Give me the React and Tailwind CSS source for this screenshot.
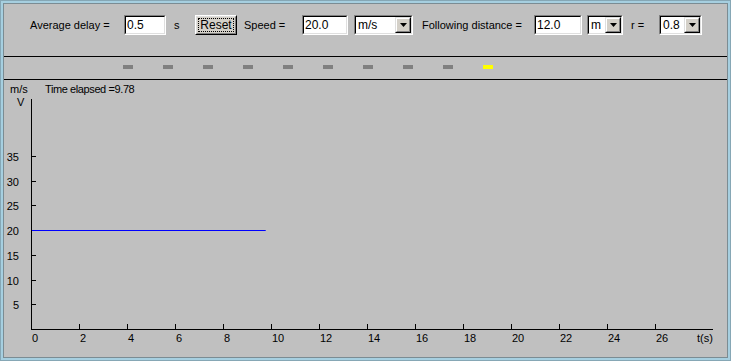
const font = { fontFamily: '"Liberation Sans", Arial, sans-serif' };

function Sunken({ className, children }) {
  return (
    <div className={`h-[20px] border border-t-[#808080] border-l-[#808080] border-b-white border-r-white ${className}`}>
      <div className="h-full border border-t-black border-l-black border-b-[#dfdfdf] border-r-[#dfdfdf] bg-white flex items-center">
        {children}
      </div>
    </div>
  );
}

function Field({ value, className }) {
  return (
    <Sunken className={className}>
      <span className="pl-[1px] text-[12px] leading-none text-black">{value}</span>
    </Sunken>
  );
}

function Select({ value, className }) {
  return (
    <Sunken className={className}>
      <span className="flex-1 pl-[2px] text-[12px] leading-none text-black">{value}</span>
      <div className="w-[16px] h-[16px] border border-t-[#dfdfdf] border-l-[#dfdfdf] border-b-black border-r-black bg-[#d4d0c8]">
        <div className="w-full h-full border border-t-white border-l-white border-b-[#808080] border-r-[#808080] flex items-center justify-center">
          <svg width="7" height="4" viewBox="0 0 7 4">
            <path d="M0 0h7L3.5 4z" fill="#000" />
          </svg>
        </div>
      </div>
    </Sunken>
  );
}

function Button({ label, className }) {
  return (
    <div className={`h-[20px] border border-t-white border-l-white border-b-black border-r-black bg-[#d4d0c8] ${className}`}>
      <div className="h-full border border-t-[#dfdfdf] border-l-[#dfdfdf] border-b-[#808080] border-r-[#808080] p-[1px]">
        <div className="h-full border border-dotted border-black flex items-center justify-center text-[12px] leading-none">
          {label}
        </div>
      </div>
    </div>
  );
}

function Chart() {
  const yTicks = [35, 30, 25, 20, 15, 10, 5];
  const xTicks = Array.from({ length: 14 }, (_, i) => i * 2);
  const yOf = (v) => Math.round(249 - v * 4.95) + 0.5;
  const xOf = (t) => 27 + t * 24 + 0.5;
  const elapsed = 9.78;
  return (
    <svg width="723" height="276" viewBox="0 0 723 276" style={font} className="block">
      <g fontSize="11" fill="#000">
        <text x="6" y="13">m/s</text>
        <text x="13" y="26">V</text>
        <text x="41" y="13" letterSpacing="-0.4">Time elapsed =9.78</text>
      </g>
      <line x1="27.5" y1="19" x2="27.5" y2="249.5" stroke="#000" />
      <line x1="27" y1="249.5" x2="709" y2="249.5" stroke="#000" />
      {yTicks.map((v) => (
        <g key={v}>
          <line x1="28" y1={yOf(v)} x2="32" y2={yOf(v)} stroke="#000" />
          <text x="15" y={yOf(v) + 4} fontSize="11" textAnchor="end">{v}</text>
        </g>
      ))}
      {xTicks.map((t) => (
        <g key={t}>
          {t > 0 && <line x1={xOf(t)} y1="244" x2={xOf(t)} y2="249" stroke="#000" />}
          <text x={xOf(t) + 0.5} y="262" fontSize="11">{t}</text>
        </g>
      ))}
      <text x="693" y="262" fontSize="11">t(s)</text>
      <line x1="28" y1={yOf(20)} x2={27 + elapsed * 24} y2={yOf(20)} stroke="#0000ff" />
    </svg>
  );
}

export default function App() {
  const markers = Array.from({ length: 10 }, (_, i) => i);
  return (
    <div style={font} className="w-[731px] h-[361px] bg-[#a6cfe0] border border-[#86a7b5] p-[2px] text-black">
      <div className="h-full border border-[#7b8c93] bg-[#c0c0c0] flex flex-col">
        <div className="h-[52px] flex items-start pt-[11px] pl-[26px] text-[11px]">
          <span className="w-[94px] h-[20px] flex items-center">Average delay =</span>
          <Field value="0.5" className="w-[42px]" />
          <span className="w-[29px] pl-[8px] h-[20px] flex items-center">s</span>
          <Button label="Reset" className="w-[42px]" />
          <span className="w-[65px] pl-[7px] h-[20px] flex items-center">Speed =</span>
          <Field value="20.0" className="w-[46px]" />
          <Select value="m/s" className="w-[59px] ml-[6px]" />
          <span className="w-[121px] pl-[9px] h-[20px] flex items-center">Following distance =</span>
          <Field value="12.0" className="w-[48px]" />
          <Select value="m" className="w-[36px] ml-[5px]" />
          <span className="w-[36px] pl-[8px] h-[20px] flex items-center">r =</span>
          <Select value="0.8" className="w-[43px]" />
        </div>
        <div className="h-[24px] border-t border-b border-black flex items-start pt-[8px] pl-[119px] gap-[30px]">
          {markers.map((i) => (
            <div key={i} className={`w-[10px] h-[4px] ${i === 9 ? 'bg-[#ffff00]' : 'bg-[#808080]'}`} />
          ))}
        </div>
        <div className="flex-1">
          <Chart />
        </div>
      </div>
    </div>
  );
}
